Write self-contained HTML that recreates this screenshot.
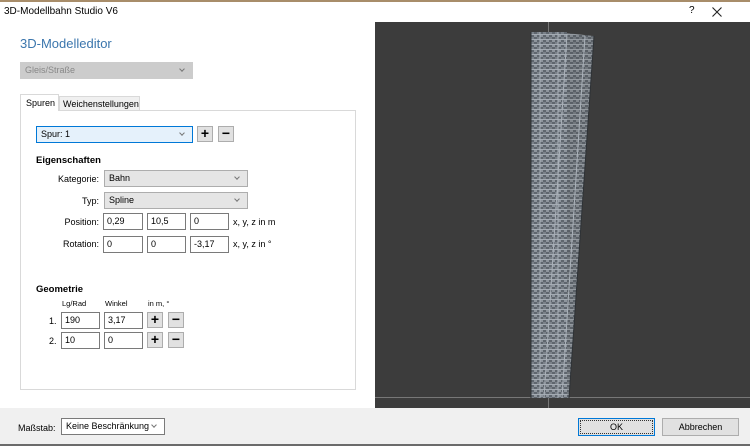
<!DOCTYPE html>
<html><head><meta charset="utf-8"><style>
*{margin:0;padding:0;box-sizing:border-box}
body{width:750px;height:446px;overflow:hidden;background:#fff;font-family:"Liberation Sans",sans-serif;font-size:9px;color:#000;position:relative}
.a{position:absolute}
.inp{position:absolute;height:17px;border:1px solid #7a7a7a;background:#fff;padding:2px 3px;font-size:9px;line-height:11px}
.dd{position:absolute;height:17px;border:1px solid #adadad;background:#e5e5e5;padding:2px 4px;font-size:9px;line-height:11px}
.dd:after{content:"";position:absolute;right:8px;top:4px;width:3px;height:3px;border-right:1px solid #777;border-bottom:1px solid #777;transform:rotate(45deg)}
.btn{position:absolute;width:16px;height:16px;border:1px solid #adadad;background:#e1e1e1;font-size:14px;font-weight:bold;line-height:13px;text-align:center}
.lbl{position:absolute;font-size:9px;text-align:right}
</style></head><body>
<div class="a" style="left:0;top:0;width:750px;height:2px;background:#a88d6a"></div>
<div class="a" style="left:4px;top:6px;font-size:10px">3D-Modellbahn Studio V6</div>
<div class="a" style="left:689px;top:5px;font-size:10px">?</div>
<svg class="a" style="left:711px;top:6px" width="12" height="12"><path d="M1.5 1.5L10.5 10.5M10.5 1.5L1.5 10.5" stroke="#222" stroke-width="1.1"/></svg>

<div class="a" style="left:20px;top:36px;font-size:13px;color:#3b76ad">3D-Modelleditor</div>
<div class="dd" style="left:20px;top:62px;width:173px;background:#cccccc;border-color:#cccccc;color:#888">Gleis/Straße</div>

<div class="a" style="left:20px;top:110px;width:336px;height:280px;border:1px solid #d9d9d9;background:#fff"></div>
<div class="a" style="left:20px;top:94px;width:39px;height:17px;border:1px solid #d9d9d9;border-bottom:none;background:#fff;padding:3px 0 0 5px">Spuren</div>
<div class="a" style="left:59px;top:96px;width:81px;height:14px;border:1px solid #d9d9d9;border-bottom:none;background:#f0f0f0;padding:2px 0 0 3px">Weichenstellungen</div>

<div class="dd" style="left:36px;top:126px;width:157px;background:#e5f1fb;border-color:#0078d7">Spur: 1</div>
<div class="btn" style="left:197px;top:126px">+</div>
<div class="btn" style="left:218px;top:126px">−</div>

<div class="a" style="left:36px;top:155px;font-weight:bold;font-size:9.5px">Eigenschaften</div>
<div class="lbl" style="left:40px;top:174px;width:59px">Kategorie:</div>
<div class="dd" style="left:104px;top:170px;width:144px">Bahn</div>
<div class="lbl" style="left:40px;top:196px;width:59px">Typ:</div>
<div class="dd" style="left:104px;top:192px;width:144px">Spline</div>
<div class="lbl" style="left:40px;top:217px;width:59px">Position:</div>
<div class="inp" style="left:103px;top:213px;width:40px">0,29</div>
<div class="inp" style="left:147px;top:213px;width:39px">10,5</div>
<div class="inp" style="left:190px;top:213px;width:39px">0</div>
<div class="a" style="left:233px;top:217px">x, y, z in m</div>
<div class="lbl" style="left:40px;top:239px;width:59px">Rotation:</div>
<div class="inp" style="left:103px;top:236px;width:40px">0</div>
<div class="inp" style="left:147px;top:236px;width:39px">0</div>
<div class="inp" style="left:190px;top:236px;width:39px">-3,17</div>
<div class="a" style="left:233px;top:239px">x, y, z in °</div>

<div class="a" style="left:36px;top:284px;font-weight:bold;font-size:9.5px">Geometrie</div>
<div class="a" style="left:62px;top:299px;font-size:7.5px">Lg/Rad</div>
<div class="a" style="left:105px;top:299px;font-size:7.5px">Winkel</div>
<div class="a" style="left:148px;top:299px;font-size:7.5px">in m, °</div>
<div class="a" style="left:49px;top:316px">1.</div>
<div class="inp" style="left:61px;top:312px;width:39px">190</div>
<div class="inp" style="left:104px;top:312px;width:39px">3,17</div>
<div class="btn" style="left:147px;top:312px">+</div>
<div class="btn" style="left:168px;top:312px">−</div>
<div class="a" style="left:49px;top:336px">2.</div>
<div class="inp" style="left:61px;top:332px;width:39px">10</div>
<div class="inp" style="left:104px;top:332px;width:39px">0</div>
<div class="btn" style="left:147px;top:332px">+</div>
<div class="btn" style="left:168px;top:332px">−</div>

<svg class="a" style="left:375px;top:22px" width="375" height="386" viewBox="375 22 375 386">
<defs><pattern id="sl" width="6" height="5" patternUnits="userSpaceOnUse"><rect width="6" height="5" fill="#5f666e"/><rect x="0" y="0" width="3" height="2" fill="#8e959d"/><rect x="3" y="2" width="3" height="2" fill="#7a8189"/><rect y="4" width="6" height="1" fill="#a3aab2"/></pattern></defs>
<rect x="375" y="22" width="375" height="386" fill="#3c3c3c"/>
<line x1="548.5" y1="22" x2="548.5" y2="408" stroke="#777" stroke-width="1"/>
<line x1="375" y1="397.5" x2="750" y2="397.5" stroke="#777" stroke-width="1"/>
<polygon points="531,32 567,32 567,398 531,398" fill="url(#sl)"/>
<polygon points="556,32 594,36 569,398 531,398 531,300" fill="url(#sl)" opacity="0.85"/>
<g stroke="#aab1b9" stroke-width="1" fill="none">
<line x1="540" y1="32" x2="540" y2="398"/><line x1="558" y1="32" x2="558" y2="398"/>
<line x1="567" y1="34" x2="544" y2="398"/><line x1="585" y1="36" x2="562" y2="398"/>
</g>
<g stroke="#2e3236" stroke-width="1"><line x1="531" y1="32" x2="531" y2="398"/><line x1="594" y1="36" x2="569" y2="398"/></g>
</svg>

<div class="a" style="left:0;top:408px;width:750px;height:36px;background:#f0f0f0"></div>
<div class="a" style="left:0;top:444px;width:750px;height:2px;background:#6b6b6b"></div>
<div class="a" style="left:18px;top:423px">Maßstab:</div>
<div class="dd" style="left:61px;top:418px;width:104px;background:#fff;border-color:#7a7a7a">Keine Beschränkung</div>
<div class="a" style="left:578px;top:418px;width:77px;height:18px;border:1px solid #0078d7;background:#e1e1e1;text-align:center;line-height:16px;font-size:9px;outline:1px dotted #333;outline-offset:-3px">OK</div>
<div class="a" style="left:662px;top:418px;width:77px;height:18px;border:1px solid #adadad;background:#e1e1e1;text-align:center;line-height:16px;font-size:9px">Abbrechen</div>
</body></html>
